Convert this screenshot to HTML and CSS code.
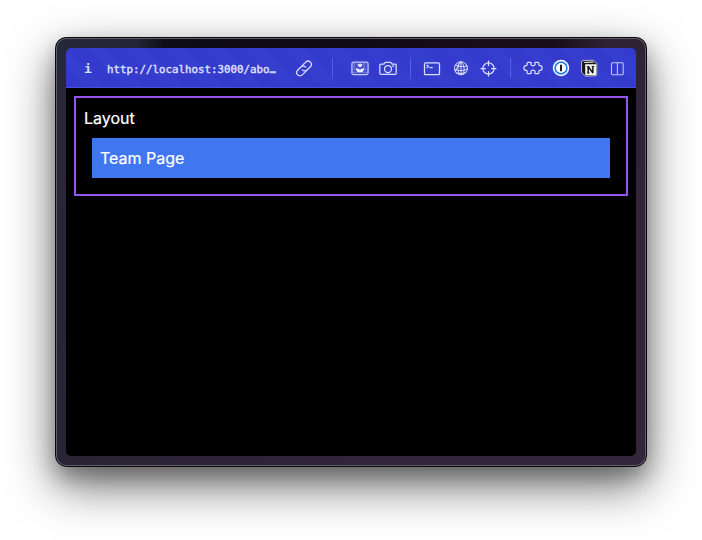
FILE: index.html
```html
<!DOCTYPE html>
<html lang="en">
<head>
<meta charset="utf-8">
<title>Team Page</title>
<link rel="stylesheet" href="styles.css">
</head>
<body>
<div class="window">
  <div class="viewport">
    <header class="toolbar">
      <span class="info">i</span>
      <span class="url">http://localhost:3000/abo…</span>
      <svg class="icon link" viewBox="0 0 20 20"><g transform="rotate(-45 10 10.500)"><path d="M9.300 13.800H4.300a3.300 3.300 0 0 1 0-6.600H8.800a3.300 3.300 0 0 1 3.300 3.500"/><path d="M10.700 7.200h5a3.300 3.300 0 0 1 0 6.600H11.200a3.300 3.300 0 0 1-3.300-3.500"/></g></svg>
      <i class="divider first"></i>
      <div class="group capture">
        <svg class="icon" viewBox="0 0 20 20"><rect class="tint" x="1.900" y="4" width="16.200" height="12.500" rx="1.700"/><path class="dots" d="M4 6h2M14 6h2.500M4 8.500h2M14 8.500h2M4 11h1M15 11h1M4 14.300h3M13 14.300h3"/><path class="solid" d="M10 9.400 7.800 7.400V5.700l1.300.8.900-1.300.9 1.300 1.300-.8v1.700zM5.800 10.200Q8.500 10 10 11.700q1.500-1.700 4.200-1.500c-.2 2.700-1.900 4.300-4.200 4.300s-4-1.600-4.200-4.300z"/></svg>
        <svg class="icon" viewBox="0 0 20 20"><path d="M3 6.100h2.800L7.300 4.400h5.400l1.500 1.700H17q1.200 0 1.200 1.200v7.900q0 1.200-1.200 1.200H3q-1.200 0-1.200-1.200V7.300q0-1.200 1.200-1.200z"/><circle cx="10" cy="11" r="3.500"/><path d="M14.500 8h1.200"/></svg>
      </div>
      <i class="divider"></i>
      <div class="group tools">
        <svg class="icon" viewBox="0 0 20 20"><rect x="2.500" y="4.900" width="15" height="11.800" rx="1"/><path d="m5 7.200 1.500 1.100L5 9.500M8 9.600h2.300"/></svg>
        <svg class="icon globe" viewBox="0 0 20 20"><circle cx="11" cy="10.300" r="6.500"/><path d="M11 3.800C7.500 6.900 7 11.900 9.400 16.500M11 3.800c3.500 3 4 8 2.100 12.500M11 3.800v13M5.400 7.100c3.500 2 8 2 11.700.8M4.500 11.200c4.200 2 9 1.800 13-.2M6.300 14.900c3.200.8 6.600.7 9.500-.4M5.300 13.900 9.500 4.400"/></svg>
        <svg class="icon" viewBox="0 0 20 20"><circle cx="10.500" cy="10.500" r="5.600"/><path d="M10.500 3v4.500M10.500 13.500V18M3 10.500h4.500M13.500 10.500H18"/></svg>
      </div>
      <i class="divider"></i>
      <div class="group extensions">
        <svg class="icon" viewBox="0 0 20 20"><path d="M5 4.300h2.500c.9 0 .9.900.5 1.500-.5 1 .5 2 2 2s2.500-1 2-2c-.4-.6-.4-1.500.5-1.500H15c.8 0 .9.500.9 1.300v1.200c0 .9.600.8 1.200.8 1.200 0 2 .9 2 2.400s-.8 2.400-2 2.400c-.6 0-1.200-.1-1.200.8v1.200c0 .8-.1 1.300-.9 1.300h-2.500c-.9 0-.9-.9-.5-1.500.5-1-.5-2-2-2s-2.500 1-2 2c.4.600.4 1.500-.5 1.500H5c-.8 0-.9-.5-.9-1.300v-1.200c0-.9-.6-.8-1.200-.8-1.200 0-2-.9-2-2.400s.8-2.400 2-2.400c.6 0 1.200.1 1.200-.8V5.600c0-.8.100-1.300.9-1.300z"/></svg>
        <svg class="icon vault" viewBox="0 0 20 20"><circle class="white" cx="10" cy="10" r="8.200"/><circle class="ring" cx="10" cy="10" r="5.900"/><path class="key" d="M10 7.600v4.800"/></svg>
        <svg class="icon notes" viewBox="0 0 20 20"><path class="cover" d="M2.900 3.200 4 2.500 14.200 2.300 17.700 5.200v11.800l-.8.900-10.500.3-3.500-3.700z"/><path class="page" d="M6.200 6.300h10.800v11H6.200zM4.300 3.900l9.500-.5 1.700 1.200-9.500.5z"/><path class="mark" d="M9.200 8.800v6M9.400 8.800l4.200 5.800M13.900 8.600v6"/><path class="serif" d="M8.200 8.600h1.500M8.200 15H10.200M13 8.500H15"/></svg>
        <svg class="icon panes" viewBox="0 0 20 20"><rect x="4.500" y="4.700" width="11.700" height="12" rx="1"/><path d="M10.400 4.700v12"/></svg>
      </div>
    </header>
    <main class="layout">
      <p class="label">Layout</p>
      <section class="team">Team Page</section>
    </main>
  </div>
</div>
</body>
</html>
```
FILE: styles.css
```css
* { box-sizing: border-box; }
body {
  margin: 0;
  height: 540px;
  padding: 37px 55px;
  overflow: hidden;
  background: #fff;
  font-family: Inter, sans-serif;
}
.window {
  width: 592px;
  height: 430px;
  padding: 9px;
  border: 1px solid #09080d;
  border-radius: 11px;
  background:
    linear-gradient(90deg, #252839 0, #242535 80px, #0e0c18 110px, #0d0a16 270px, #190b1a 430px, #190d1c 500px, #302234 550px) top / 100% 11px no-repeat,
    linear-gradient(135deg, #252839 0%, #292434 45%, #33243a 75%, #34253a 100%);
  box-shadow: inset 0 0 0 1px #625d6b, 0 19px 48px rgba(0, 0, 0, .56), 0 10px 20px rgba(0, 0, 0, .25);
  display: flex;
}
.viewport {
  margin: 1px;
  flex: 1;
  border-radius: 5px;
  overflow: hidden;
  background: #000;
}
.toolbar {
  height: 40px;
  display: flex;
  align-items: center;
  padding: 0 9px 0 18px;
  border-bottom: 1px solid #4650db;
  background: repeating-linear-gradient(45deg, #343bcc 0 13px, #363ecf 15px 26px, #343bcc 28px);
  color: #dcdffc;
  font-family: "DejaVu Sans Mono", monospace;
}
.info {
  width: 23px;
  padding-top: 2px;
  font-size: 13px;
  font-weight: 700;
}
.url {
  width: 187px;
  font-size: 10.8px;
  -webkit-text-stroke: .45px #dcdffc;
  white-space: nowrap;
  padding-top: 3px;
}
.icon {
  width: 20px;
  height: 20px;
  flex: none;
  fill: none;
  stroke: #dcdffc;
  stroke-width: 1.25;
  stroke-linecap: round;
  stroke-linejoin: round;
}
.divider {
  width: 1px;
  height: 20px;
  flex: none;
  background: #555eea;
}
.divider.first { margin-left: 18px; }
.group { display: flex; flex: none; }
.capture { gap: 8px; margin: 0 12px 0 17px; }
.tools { gap: 8px; margin: 0 12px 0 11px; }
.extensions { gap: 8px; margin-left: 12px; }
.tint { fill: #4750d3; stroke: #c2c8f8; }
.dots { stroke: #a8b0f5; stroke-width: 1; stroke-dasharray: .5 2; }
.solid { fill: #f0f1ff; stroke: none; }
.globe { stroke-width: 1; }
.white { fill: #fff; stroke: none; }
.ring { fill: #fff; stroke: #287df0; stroke-width: 1.7; }
.key { stroke: #171a20; stroke-width: 2; }
.cover { fill: #161616; stroke: #dce0e5; stroke-width: .8; }
.page { fill: #f6f6f4; stroke: none; }
.mark { stroke: #111; stroke-width: 1.5; }
.serif { stroke: #111; stroke-width: .8; }
.panes { stroke: #bdc3fa; stroke-width: 1.1; }
.layout {
  height: 100px;
  margin: 8px;
  padding: 8px;
  border: 2px solid #9553f1;
  color: #fff;
  font-size: 16px;
  line-height: 24px;
  -webkit-text-stroke: .2px #fff;
}
.label { margin: 0; }
.team {
  margin: 8px;
  padding: 8px;
  background: #4076ef;
}
```
